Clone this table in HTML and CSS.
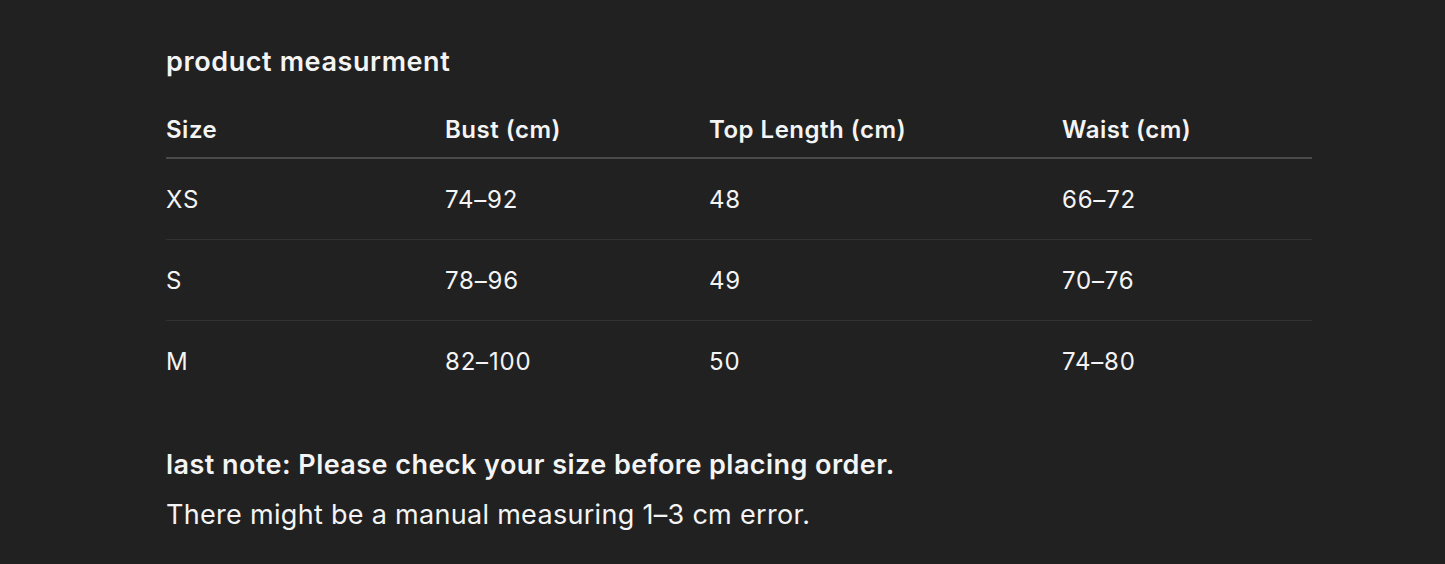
FILE: index.html
```html
<!DOCTYPE html>
<html lang="en">
<head>
<meta charset="utf-8">
<link rel="stylesheet" href="styles.css">
</head>
<body>
<main class="page">
  <h2 class="title">product measurment</h2>
  <table class="sizes">
    <thead>
      <tr>
        <th class="c1">Size</th>
        <th class="c2">Bust (cm)</th>
        <th class="c3">Top Length (cm)</th>
        <th class="c4">Waist (cm)</th>
      </tr>
    </thead>
    <tbody>
      <tr><td>XS</td><td>74–92</td><td>48</td><td>66–72</td></tr>
      <tr><td>S</td><td>78–96</td><td>49</td><td>70–76</td></tr>
      <tr><td>M</td><td>82–100</td><td>50</td><td>74–80</td></tr>
    </tbody>
  </table>
  <p class="note-strong">last note: Please check your size before placing order.</p>
  <p class="note">There might be a manual measuring 1–3 cm error.</p>
</main>
</body>
</html>
```
FILE: styles.css
```css
html, body {
  margin: 0;
  padding: 0;
  background: #212121;
}
body {
  font-family: Inter, "Noto Sans", "Liberation Sans", sans-serif;
  color: #f4f4f4;
}
.page {
  padding: 44px 0 0 166px;
  width: 1146px;
}
.title {
  margin: 0 0 21px;
  font-size: 27px;
  line-height: 36px;
  font-weight: 600;
  letter-spacing: 0.6px;
}
.sizes {
  width: 1146px;
  border-collapse: collapse;
  table-layout: fixed;
}
.c1 { width: 279px; }
.c2 { width: 264px; }
.c3 { width: 353px; }
.c4 { width: 250px; }
.sizes th {
  text-align: left;
  font-size: 24px;
  line-height: 30px;
  font-weight: 600;
  letter-spacing: 0.5px;
  padding: 14px 0 12px;
  border-bottom: 2px solid #4a4a4a;
}
.sizes td {
  font-size: 24px;
  line-height: 30px;
  font-weight: 400;
  letter-spacing: 0.8px;
  padding: 26px 0 24px;
  border-bottom: 1px solid #333333;
}
.sizes tbody tr:last-child td {
  border-bottom: none;
}
.note-strong {
  margin: 39px 0 0;
  font-size: 27px;
  line-height: 50px;
  font-weight: 600;
  letter-spacing: 0.45px;
}
.note {
  margin: 0;
  font-size: 27px;
  line-height: 50px;
  font-weight: 400;
  letter-spacing: 0.3px;
}
```
